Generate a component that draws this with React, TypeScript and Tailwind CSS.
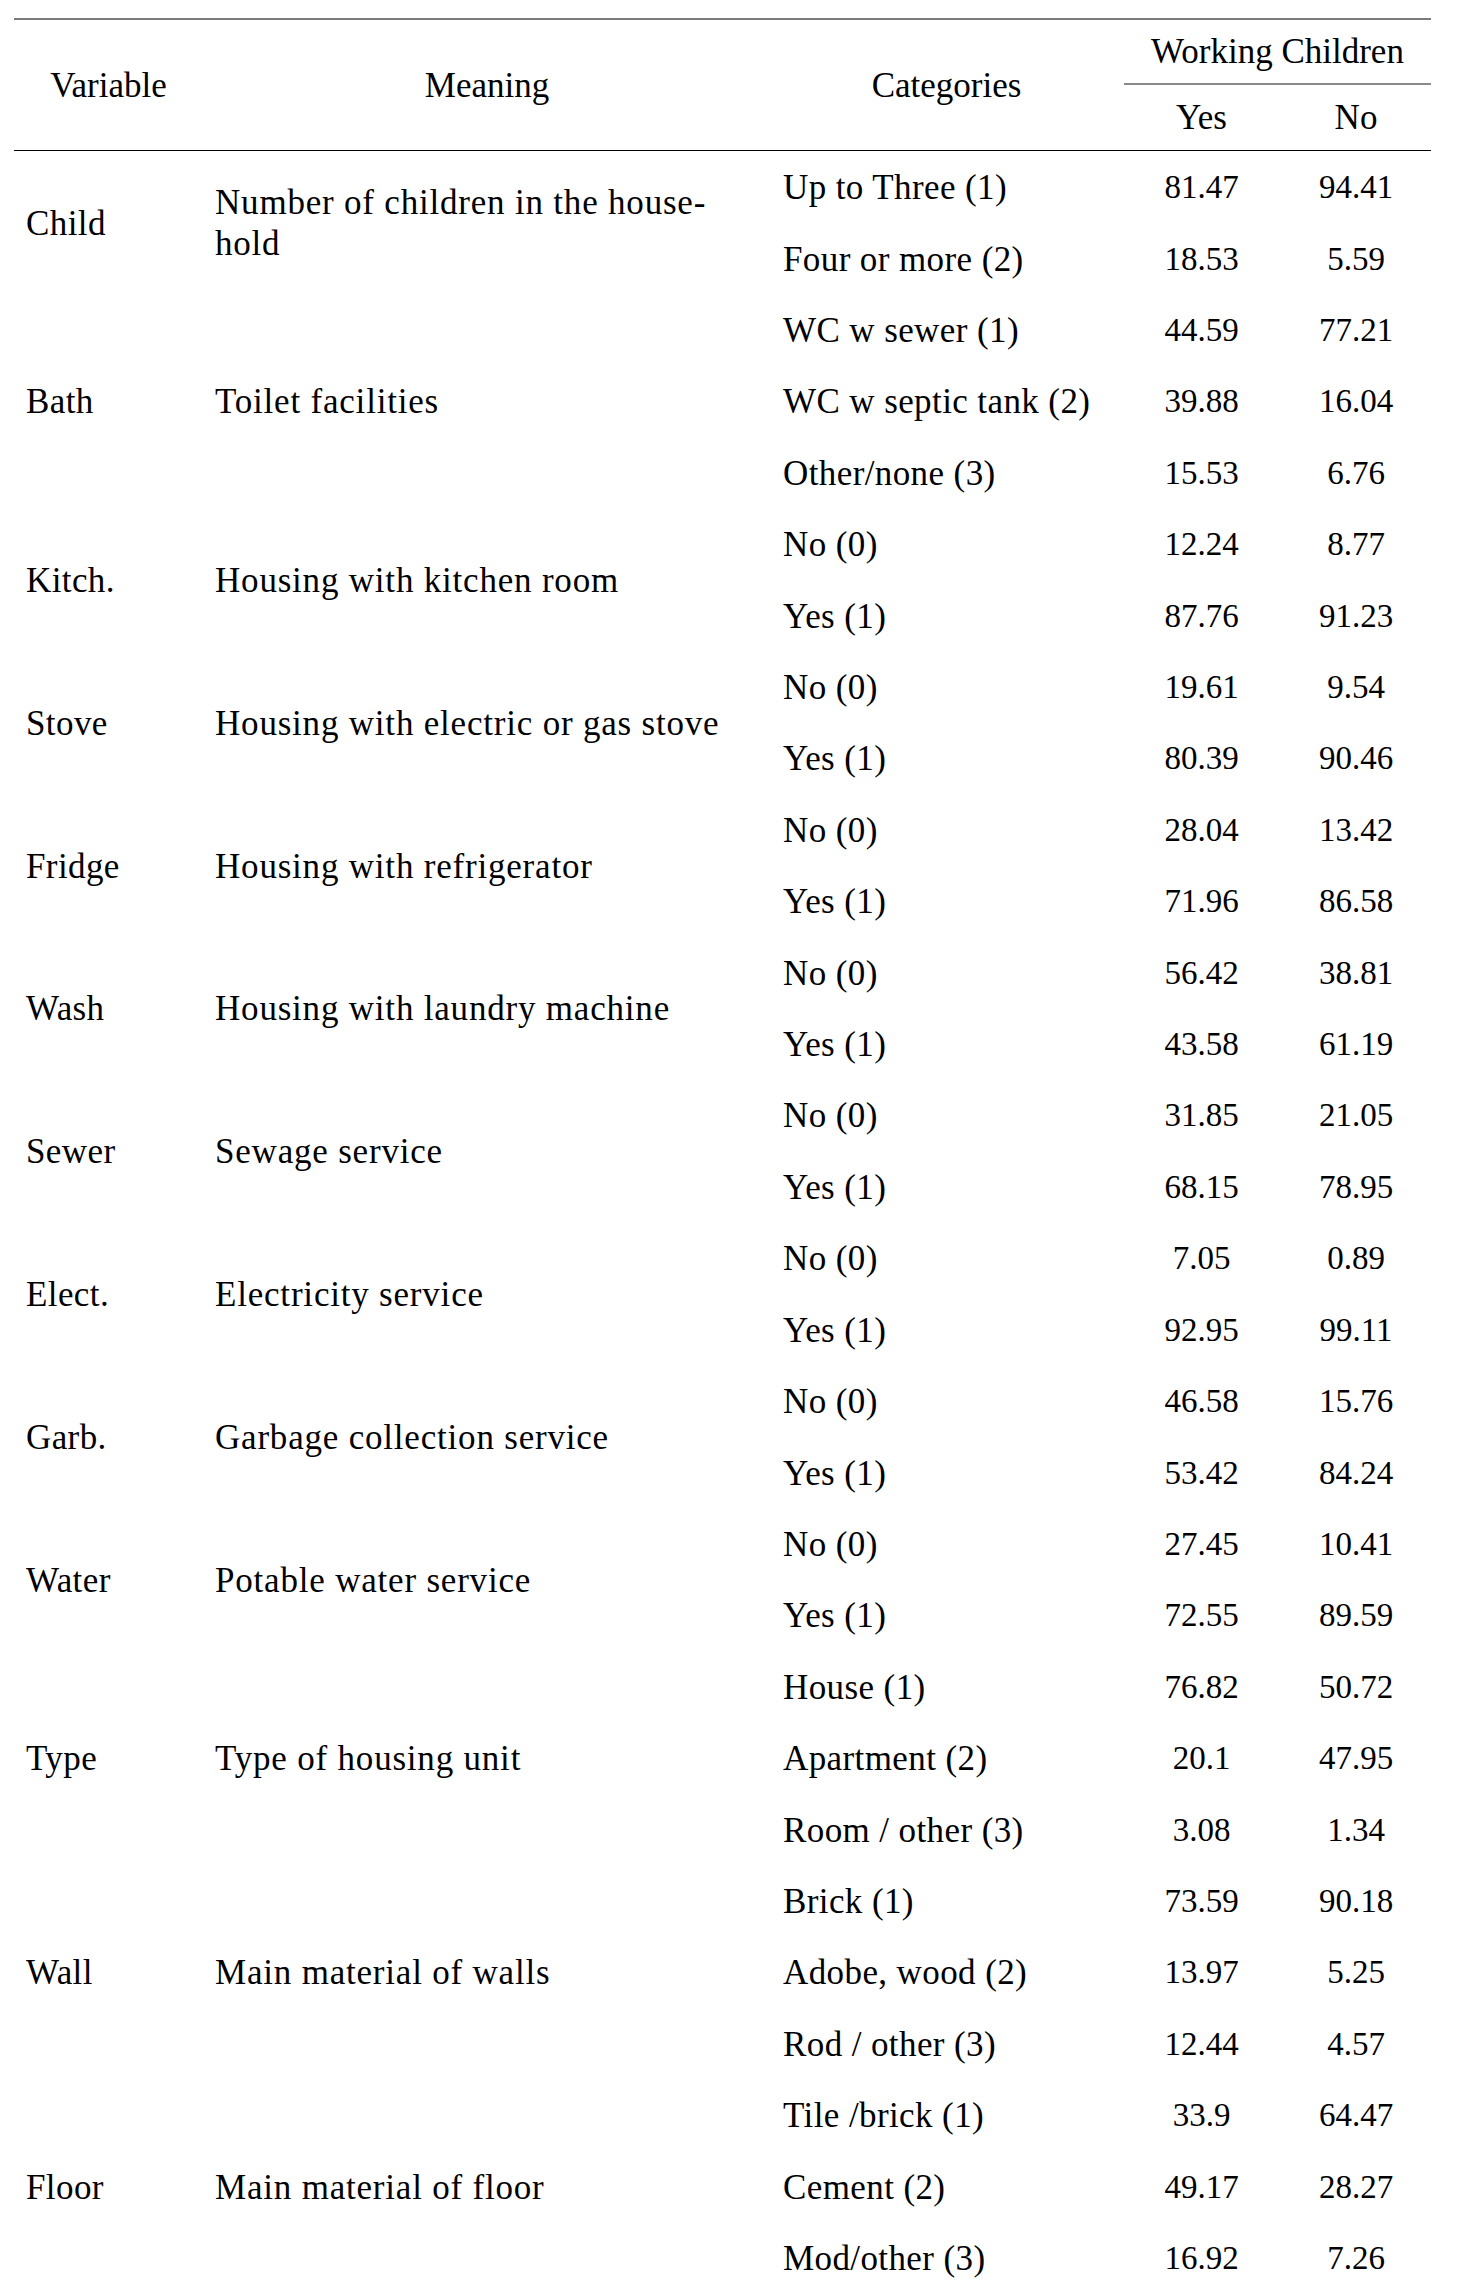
import React from "react";

type Row = [string, string, string];
type Group = { v: string; m: React.ReactNode; rows: Row[] };

const groups: Group[] = [
  {
    v: "Child",
    m: (
      <>
        Number of children in the house-
        <br />
        hold
      </>
    ),
    rows: [
      ["Up to Three (1)", "81.47", "94.41"],
      ["Four or more (2)", "18.53", "5.59"],
    ],
  },
  {
    v: "Bath",
    m: "Toilet facilities",
    rows: [
      ["WC w sewer (1)", "44.59", "77.21"],
      ["WC w septic tank (2)", "39.88", "16.04"],
      ["Other/none (3)", "15.53", "6.76"],
    ],
  },
  {
    v: "Kitch.",
    m: "Housing with kitchen room",
    rows: [
      ["No (0)", "12.24", "8.77"],
      ["Yes (1)", "87.76", "91.23"],
    ],
  },
  {
    v: "Stove",
    m: "Housing with electric or gas stove",
    rows: [
      ["No (0)", "19.61", "9.54"],
      ["Yes (1)", "80.39", "90.46"],
    ],
  },
  {
    v: "Fridge",
    m: "Housing with refrigerator",
    rows: [
      ["No (0)", "28.04", "13.42"],
      ["Yes (1)", "71.96", "86.58"],
    ],
  },
  {
    v: "Wash",
    m: "Housing with laundry machine",
    rows: [
      ["No (0)", "56.42", "38.81"],
      ["Yes (1)", "43.58", "61.19"],
    ],
  },
  {
    v: "Sewer",
    m: "Sewage service",
    rows: [
      ["No (0)", "31.85", "21.05"],
      ["Yes (1)", "68.15", "78.95"],
    ],
  },
  {
    v: "Elect.",
    m: "Electricity service",
    rows: [
      ["No (0)", "7.05", "0.89"],
      ["Yes (1)", "92.95", "99.11"],
    ],
  },
  {
    v: "Garb.",
    m: "Garbage collection service",
    rows: [
      ["No (0)", "46.58", "15.76"],
      ["Yes (1)", "53.42", "84.24"],
    ],
  },
  {
    v: "Water",
    m: "Potable water service",
    rows: [
      ["No (0)", "27.45", "10.41"],
      ["Yes (1)", "72.55", "89.59"],
    ],
  },
  {
    v: "Type",
    m: "Type of housing unit",
    rows: [
      ["House (1)", "76.82", "50.72"],
      ["Apartment (2)", "20.1", "47.95"],
      ["Room / other (3)", "3.08", "1.34"],
    ],
  },
  {
    v: "Wall",
    m: "Main material of walls",
    rows: [
      ["Brick (1)", "73.59", "90.18"],
      ["Adobe, wood (2)", "13.97", "5.25"],
      ["Rod / other (3)", "12.44", "4.57"],
    ],
  },
  {
    v: "Floor",
    m: "Main material of floor",
    rows: [
      ["Tile /brick (1)", "33.9", "64.47"],
      ["Cement (2)", "49.17", "28.27"],
      ["Mod/other (3)", "16.92", "7.26"],
    ],
  },
];

const spanClass: Record<number, string> = {
  2: "row-span-2",
  3: "row-span-3",
};

export default function App() {
  return (
    <div
      className="min-h-[2283px] bg-white text-black"
      style={{ fontFamily: '"Liberation Serif", "Times New Roman", serif' }}
    >
      <div className="pl-[14px] pt-[18px]">
        <div className="w-[1417px]">
          {/* header */}
          <div className="grid grid-cols-[189px_568px_351px_159px_150px] grid-rows-[65px_65px] border-t-2 border-b border-t-[#7a7a7a] border-b-black text-[35px] leading-[41px]">
            <div className="row-span-2 flex items-center justify-center">Variable</div>
            <div className="row-span-2 flex items-center justify-center">Meaning</div>
            <div className="row-span-2 flex items-center justify-center">Categories</div>
            <div className="col-span-2 ml-[2px] flex items-center justify-center border-b-2 border-[#8a8a8a]">
              Working Children
            </div>
            <div className="col-start-4 flex items-center justify-center">Yes</div>
            <div className="col-start-5 flex items-center justify-center">No</div>
          </div>
          {/* body */}
          <div className="mt-[1px] grid grid-cols-[189px_568px_351px_159px_150px] auto-rows-[71.42px] text-[35px] leading-[41px]">
            {groups.map((g) => (
              <React.Fragment key={g.v}>
                <div className={`col-start-1 ${spanClass[g.rows.length]} flex items-center pl-[12px] tracking-[0.4px]`}>
                  {g.v}
                </div>
                <div className={`col-start-2 ${spanClass[g.rows.length]} flex items-center pl-[12px] tracking-[0.8px]`}>
                  <div>{g.m}</div>
                </div>
                {g.rows.map((r) => (
                  <React.Fragment key={r[0]}>
                    <div className="col-start-3 flex items-center whitespace-nowrap pl-[12px] tracking-[0.4px]">{r[0]}</div>
                    <div className="col-start-4 flex items-center justify-center text-[33px]">{r[1]}</div>
                    <div className="col-start-5 flex items-center justify-center text-[33px]">{r[2]}</div>
                  </React.Fragment>
                ))}
              </React.Fragment>
            ))}
          </div>
        </div>
      </div>
    </div>
  );
}
